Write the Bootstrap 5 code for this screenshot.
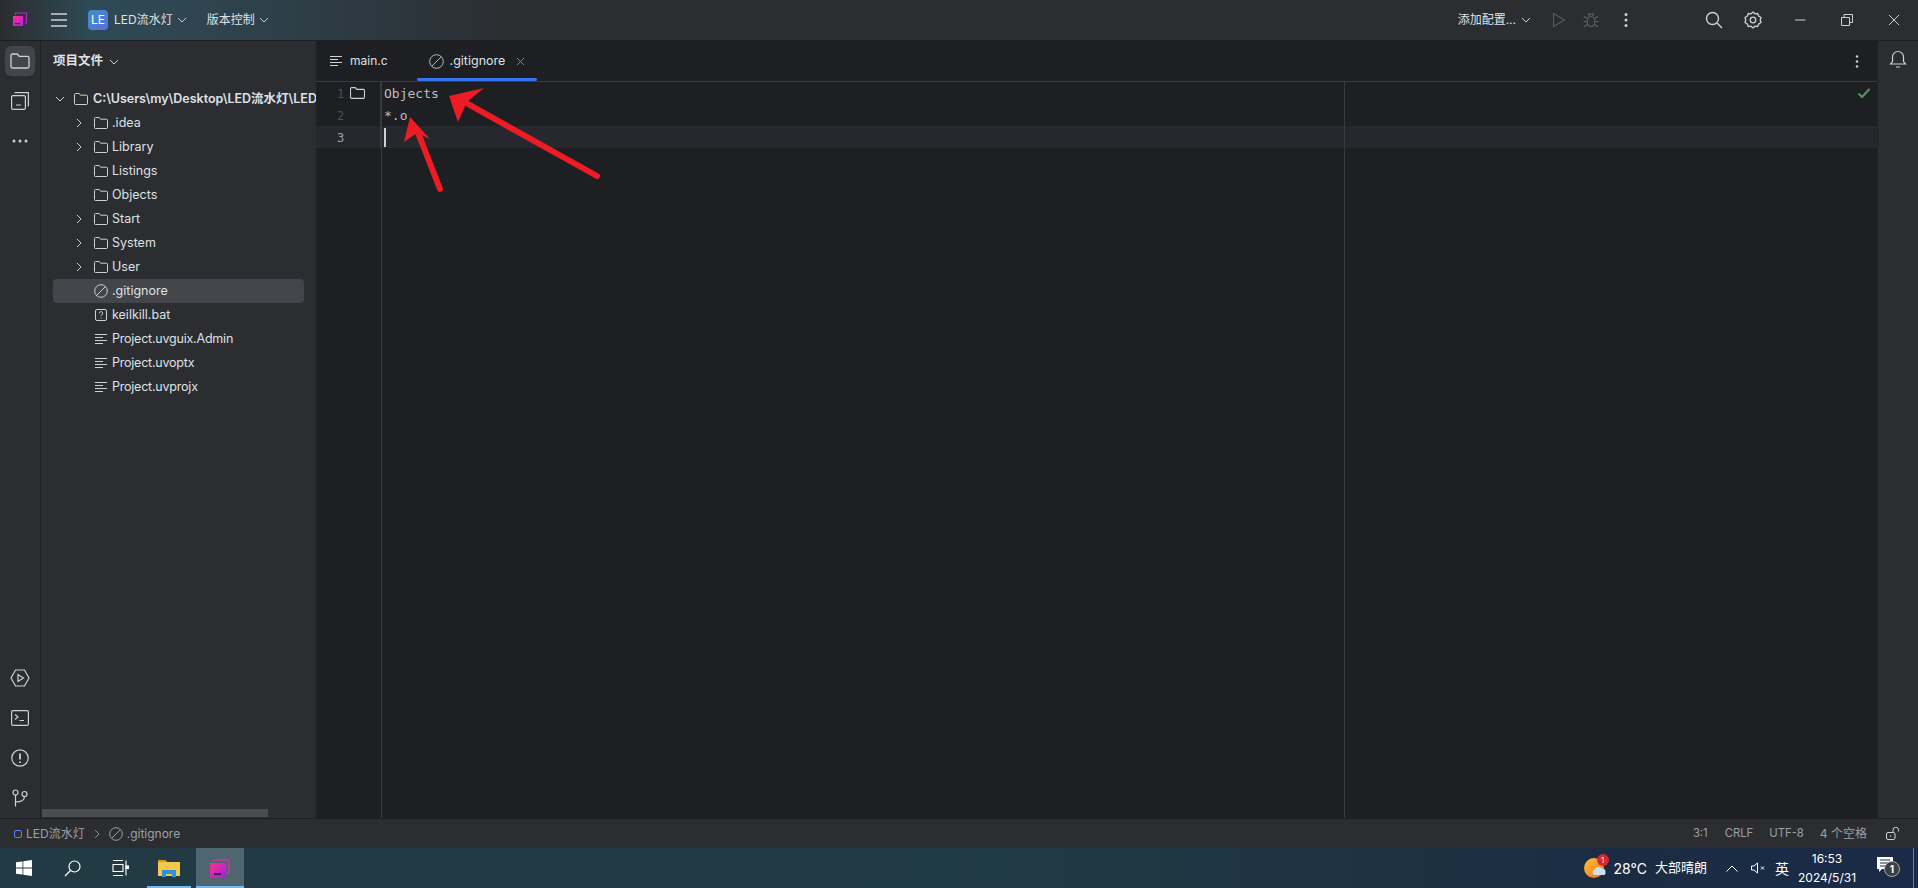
<!doctype html>
<html lang="zh"><head><meta charset="utf-8"><title>LED流水灯</title>
<link href="https://cdn.jsdelivr.net/npm/bootstrap@5.3.0/dist/css/bootstrap.min.css" rel="stylesheet">
<style>
html,body{height:100%;margin:0;overflow:hidden;background:#1e1f22}
body{font-family:Inter,"Noto Sans CJK SC",sans-serif;font-size:13px;color:#dfe1e5;position:relative;width:1918px;height:888px}
svg{display:block;flex:none;fill:none;stroke:#ced0d6;stroke-width:1}
.titlebar{height:41px;background:linear-gradient(90deg,#2b2d30 0,#2e4a55 90px,#2f4550 200px,#2d3a42 350px,#2b2d30 520px);border-bottom:1px solid #1e1f22;flex:none}
.tb-menu{font-size:12px;color:#dfe1e5}
.projbadge{width:20px;height:20px;border-radius:4px;background:linear-gradient(135deg,#3c8fc4,#5a6fe0);color:#fff;font-size:12px;line-height:20px;text-align:center}
.workarea{height:777px;flex:none}
.rail{width:41px;background:#2b2d30;border-right:1px solid #1e1f22;flex:none;padding-top:5px}
.railr{width:41px;background:#2b2d30;border-left:1px solid #1e1f22;flex:none;padding-top:9px}
.railbtn{width:30px;height:30px;border-radius:6px;margin-left:5px;margin-bottom:10px}
.railbtn.on{background:#43454a}
.lower .railbtn:last-child{margin-bottom:5px}
.sidebar{width:275px;background:#2b2d30;flex:none;position:relative;overflow:hidden}
.sidehead{height:41px;padding-left:12px;font-weight:600;font-size:12.5px}
.treelist{margin-top:5px}
.treerow{height:24px;white-space:nowrap;font-size:12.5px;line-height:24px;border-radius:4px;margin:0 12px;color:#dfe1e5}
.treerow.sel{background:#43454a}
.rootlabel{font-weight:600}
.tightlabel{letter-spacing:-.22px}
.hscroll{position:absolute;left:1px;bottom:1px;width:226px;height:8px;background:#4a4c50}
.editor{flex:1 1 auto;min-width:0;display:flex;flex-direction:column;position:relative}
.tabstrip{height:41px;border-bottom:1px solid #393b40;flex:none}
.edtab{height:40px;padding:0 12px;position:relative;font-size:12.5px}
.edtab.act::after{content:"";position:absolute;left:0;right:0;bottom:0;height:3px;border-radius:2px;background:#3574f0}
.plaintab{font-size:12px;padding-left:14px;padding-right:29px}
.codebody{flex:1 1 auto;position:relative;font-family:"DejaVu Sans Mono",monospace;font-size:13px;color:#bcbec4}
.cline{height:22px;line-height:24px}
.cline.cur{background:#26282e}
.lnum{width:65px;flex:none;padding-left:21px;color:#4b5059;font-size:12px;position:relative;border-right:1px solid #393b40;height:100%}
.cur .lnum{color:#a1a3ab}
.ctext{padding-left:3px}
.caret{width:2px;height:19px;background:#ced0d6;display:block}
.gutterline{position:absolute;top:0;bottom:0;left:65px;width:1px;background:#393b40}
.marginline{position:absolute;top:0;bottom:0;left:1028px;width:1px;background:#393b40}
.okmark{position:absolute;right:6px;top:5px}
.status{height:30px;background:#2b2d30;border-top:1px solid #1e1f22;flex:none;font-size:12px;color:#9da0a8;padding:0 18px 0 14px}
.statnarrow{font-size:11.3px}
.taskbar{height:40px;background:linear-gradient(90deg,#213a43 0%,#213b44 50%,#1b2c42 85%,#1a2a48 100%);flex:none;color:#fff}
.tbicon{height:40px;width:48px;position:relative}
.tbicon.run::after{content:"";position:absolute;left:0;right:0;bottom:0;height:2px;background:#76b9ed}
.tbicon.active{background:#4f6670}
.tray{font-size:13px}
.clock{font-size:12px;line-height:19px;text-align:center}
.arrows{position:absolute;left:0;top:0;pointer-events:none}
.arrows path{fill:#ed1c24;stroke:none}
.arrows line{stroke:#ed1c24;stroke-width:6;stroke-linecap:round}
.notif{position:absolute;right:-3px;bottom:3px;width:16px;height:16px;border-radius:50%;background:#3b3f42;border:1px solid #aaa;font-size:10px;font-weight:700;line-height:14px;text-align:center}
.redbadge{position:absolute;right:-3px;top:-3px;width:12px;height:12px;border-radius:50%;background:#d6282b;font-size:8px;line-height:12px;text-align:center;color:#fff}
</style></head>
<body class="d-flex flex-column">

<div class="titlebar d-flex align-items-center">
  <div class="d-flex align-items-center justify-content-center" style="width:40px">
    <svg width="16" height="16" viewBox="0 0 16 16"><defs><linearGradient id="lg" x1="0" y1="0" x2="1" y2="1"><stop offset="0" stop-color="#ff318c"/><stop offset="1" stop-color="#b31fe0"/></linearGradient></defs><path d="M3.5 3V1h11v10h-2" stroke="#b325d8" stroke-width="1.2"/><rect x="1" y="4" width="10" height="10" fill="url(#lg)" stroke="none"/><rect x="3" y="11" width="5" height="1.2" fill="#2b2d30" stroke="none"/></svg>
  </div>
  <svg width="16" height="16" viewBox="0 0 16 16" style="margin-left:11px;stroke-width:1.3"><path d="M0 2h16M0 8h16M0 14h16"/></svg>
  <div class="projbadge" style="margin-left:21px">LE</div>
  <span class="tb-menu" style="margin-left:6px">LED流水灯</span>
  <svg width="10" height="10" viewBox="0 0 10 10" class="ms-1"><path d="M1 3l4 4 4-4"/></svg>
  <span class="tb-menu ms-3 ps-1">版本控制</span>
  <svg width="10" height="10" viewBox="0 0 10 10" class="ms-1"><path d="M1 3l4 4 4-4"/></svg>
  <div class="ms-auto d-flex align-items-center">
    <span class="tb-menu">添加配置...</span>
    <svg width="10" height="10" viewBox="0 0 10 10" style="margin-left:5px"><path d="M1 3l4 4 4-4"/></svg>
    <svg width="14" height="16" viewBox="0 0 14 16" style="margin-left:21px;stroke:#55585e;stroke-width:1.2"><path d="M1.500 1.500v13l11-6.500z"/></svg>
    <svg width="16" height="16" viewBox="0 0 16 16" style="margin-left:17px;stroke:#5c5f65;stroke-width:1.200"><path d="M5.500 4.500a2.500 2.500 0 0 1 5 0"/><ellipse cx="8" cy="9.500" rx="3.800" ry="5"/><path d="M5.500 1l1.200 1.500M10.500 1L9.300 2.500M1 4.500l3.500 2M15 4.500l-3.500 2M.5 9.500h3.700M15.500 9.500h-3.700M1 15l3.500-2.500M15 15l-3.500-2.500"/></svg>
    <svg width="4" height="16" viewBox="0 0 4 16" style="margin-left:25px;fill:#ced0d6;stroke:none"><circle cx="2" cy="2.500" r="1.500"/><circle cx="2" cy="8" r="1.500"/><circle cx="2" cy="13.500" r="1.500"/></svg>
    <svg width="18" height="18" viewBox="0 0 18 18" style="margin-left:77px;stroke-width:1.400"><circle cx="7.500" cy="7.500" r="6"/><path d="M12 12l5 5"/></svg>
    <svg width="18" height="18" viewBox="0 0 18 18" style="margin-left:21px;stroke-width:1.300"><path d="M9 1l2 1.800 2.700-.3 1 2.500 2.300 1.500-.8 2.500.8 2.500-2.300 1.500-1 2.500-2.700-.3L9 17l-2-1.800-2.700.3-1-2.500L1 11.500 1.800 9 1 6.500 3.300 5l1-2.500 2.700.3z"/><circle cx="9" cy="9" r="2.800"/></svg>
    <svg width="12" height="12" viewBox="0 0 12 12" style="margin-left:32px"><path d="M1 6h10.500"/></svg>
    <svg width="12" height="12" viewBox="0 0 12 12" style="margin-left:35px"><path d="M.5 3.500h8v8h-8zM3 3.500V.5h8.500v8H8.500"/></svg>
    <svg width="12" height="12" viewBox="0 0 12 12" style="margin-left:35px;margin-right:18px"><path d="M1 1l10 10M11 1L1 11"/></svg>
  </div>
</div>

<div class="workarea d-flex">
  <div class="rail d-flex flex-column">
    <div class="railbtn on d-flex align-items-center justify-content-center"><svg width="20" height="16" viewBox="0 0 20 16" style="stroke-width:1.300"><path d="M1 13.500v-11A1.500 1.500 0 0 1 2.500 1h4.700l2 2.300h8.300A1.500 1.500 0 0 1 19 4.800v8.700a1.500 1.500 0 0 1-1.500 1.500h-15A1.500 1.500 0 0 1 1 13.500z"/></svg></div>
    <div class="railbtn d-flex align-items-center justify-content-center"><svg width="18" height="18" viewBox="0 0 18 18" style="stroke-width:1.200"><rect x=".6" y="3.600" width="13.800" height="13.800" rx="1.500"/><path d="M3.500 .6H17.400V14.500M5 13h5"/></svg></div>
    <div class="railbtn d-flex align-items-center justify-content-center"><svg width="16" height="4" viewBox="0 0 16 4" style="fill:#ced0d6;stroke:none"><circle cx="2" cy="2" r="1.500"/><circle cx="8" cy="2" r="1.500"/><circle cx="14" cy="2" r="1.500"/></svg></div>
    <div class="lower mt-auto">
      <div class="railbtn d-flex align-items-center justify-content-center"><svg width="20" height="18" viewBox="0 0 20 18" style="stroke-width:1.200"><path d="M1 9l4.500-8h9L19 9l-4.500 8h-9zM8 5.500v7l5.500-3.500z"/></svg></div>
      <div class="railbtn d-flex align-items-center justify-content-center"><svg width="18" height="16" viewBox="0 0 18 16" style="stroke-width:1.200"><rect x=".6" y=".6" width="16.800" height="14.800" rx="1.500"/><path d="M4 4.500l3 2.500-3 2.500M8.500 10.500H13"/></svg></div>
      <div class="railbtn d-flex align-items-center justify-content-center"><svg width="18" height="18" viewBox="0 0 18 18" style="stroke-width:1.200"><circle cx="9" cy="9" r="8.200"/><path d="M9 4.500v6M9 12.500v1.500" stroke-width="1.800"/></svg></div>
      <div class="railbtn d-flex align-items-center justify-content-center"><svg width="16" height="18" viewBox="0 0 16 18" style="stroke-width:1.200"><circle cx="3.500" cy="3.500" r="2.500"/><circle cx="12.500" cy="5" r="2.500"/><path d="M3.500 6v11.500M3.500 13c5 0 9-1.500 9-5.500"/></svg></div>
    </div>
  </div>

  <div class="sidebar">
    <div class="sidehead d-flex align-items-center">项目文件<svg width="10" height="10" viewBox="0 0 10 10" style="margin-left:6px"><path d="M1 3l4 4 4-4"/></svg></div>
    <div id="tree" class="treelist"></div>
    <div class="hscroll"></div>
  </div>

  <div class="editor">
    <div class="tabstrip d-flex align-items-end">
      <div class="edtab plaintab d-flex align-items-center">
        <svg width="13" height="10" viewBox="0 0 13 10"><path d="M0 .5h12M0 3.500h8M0 6.500h12M0 9.500h8"/></svg><span style="margin-left:7px">main.c</span>
      </div>
      <div class="edtab act d-flex align-items-center">
        <svg width="15" height="15" viewBox="0 0 15 15" style="stroke:#b4b8bf"><circle cx="7.500" cy="7.500" r="6.800"/><path d="M2.800 12.200l9.400-9.400"/></svg>
        <span style="margin-left:6px">.gitignore</span>
        <svg width="9" height="9" viewBox="0 0 9 9" style="margin-left:11px;stroke:#7f8288"><path d="M1 1l7 7M8 1L1 8"/></svg>
      </div>
      <svg width="4" height="13" viewBox="0 0 4 13" class="ms-auto align-self-center" style="margin-right:18px;fill:#ced0d6;stroke:none"><circle cx="2" cy="1.500" r="1.200"/><circle cx="2" cy="6.500" r="1.200"/><circle cx="2" cy="11.500" r="1.200"/></svg>
    </div>
    <div class="codebody">
      <div class="cline d-flex"><div class="lnum">1<svg width="15" height="12" viewBox="0 0 14 11" style="position:absolute;left:34px;top:5px;stroke:#ced0d6" aria-hidden="true"><path d="M.5 9.500v-8a1 1 0 0 1 1-1h3.500l1.200 1.600h6.300a1 1 0 0 1 1 1v6.400a1 1 0 0 1-1 1h-11a1 1 0 0 1-1-1z"/></svg></div><div class="ctext">Objects</div></div>
      <div class="cline d-flex"><div class="lnum">2</div><div class="ctext">*.o</div></div>
      <div class="cline cur d-flex"><div class="lnum">3</div><div class="ctext d-flex align-items-center"><span class="caret"></span></div></div>
      <div class="gutterline"></div>
      <div class="marginline"></div>
      <svg class="okmark" width="14" height="12" viewBox="0 0 14 12" style="stroke:#57965c;stroke-width:2"><path d="M1.500 6.500l3.500 3.500 7.500-8"/></svg>
    </div>
  </div>

  <div class="railr">
    <div class="d-flex justify-content-center"><svg width="18" height="18" viewBox="0 0 18 18" style="stroke-width:1.200"><path d="M1.500 14h15l-2-2.500V7a5.500 5.500 0 0 0-11 0v4.500zM7 17h4"/></svg></div>
  </div>
</div>

<div class="status d-flex align-items-center">
  <svg width="8" height="8" viewBox="0 0 8 8" style="stroke:#548af7"><rect x=".5" y=".5" width="7" height="7" rx="1.500"/></svg>
  <span class="ms-1">LED流水灯</span>
  <svg width="6" height="10" viewBox="0 0 6 10" style="margin-left:9px;stroke:#8a8d93"><path d="M1 1l4 4-4 4"/></svg>
  <svg width="14" height="14" viewBox="0 0 14 14" style="margin-left:9px;stroke:#9da0a8"><circle cx="7" cy="7" r="6.300"/><path d="M2.700 11.300l8.600-8.600"/></svg>
  <span class="ms-1">.gitignore</span>
  <div class="ms-auto d-flex align-items-center">
    <span class="statnarrow">3:1</span><span class="statnarrow" style="margin-left:17px">CRLF</span><span class="statnarrow" style="margin-left:16px">UTF-8</span><span style="margin-left:16px">4 个空格</span>
    <svg width="14" height="13" viewBox="0 0 14 13" style="margin-left:19px;stroke:#ced0d6"><rect x=".5" y="5.500" width="8.500" height="7" rx="1.500"/><path d="M7 5.500V3a2.700 2.700 0 0 1 5.500 0v1.500M4.700 8.500v1.500"/></svg>
  </div>
</div>

<div class="taskbar d-flex align-items-center">
  <div class="tbicon d-flex align-items-center justify-content-center">
    <svg width="16" height="16" viewBox="0 0 16 16" style="fill:#fff;stroke:none"><path d="M0 2.300l6.500-.9v6.200H0zM7.300 1.300L16 0v7.600H7.300zM0 8.400h6.500v6.200L0 13.700zM7.300 8.400H16V16l-8.700-1.300z"/></svg>
  </div>
  <div class="tbicon d-flex align-items-center justify-content-center">
    <svg width="17" height="17" viewBox="0 0 17 17" style="stroke:#fff;stroke-width:1.200"><circle cx="10.500" cy="6.500" r="5.500"/><path d="M6.500 10.500L1 16"/></svg>
  </div>
  <div class="tbicon d-flex align-items-center justify-content-center">
    <svg width="17" height="16" viewBox="0 0 17 16" style="stroke:#fff;stroke-width:1.100"><path d="M1 .5h10M1 15.500h10M1 4.500h10v7H1zM14 .5v15"/><rect x="14" y="6" width="2.500" height="2.500" fill="#fff"/></svg>
  </div>
  <div class="tbicon run d-flex align-items-center justify-content-center" style="margin-left:3px;width:44px">
    <svg width="22" height="18" viewBox="0 0 22 18" style="stroke:none"><path d="M0 1h7l2 2h13v14H0z" fill="#f5c84c"/><path d="M0 1h7l2 2H0z" fill="#d79b1a"/><path d="M4 18v-7h14v7h-4v-3H8v3z" fill="#2f91d8"/></svg>
  </div>
  <div class="tbicon active run d-flex align-items-center justify-content-center" style="margin-left:5px">
    <svg width="20" height="19" viewBox="0 0 20 19" style="stroke-width:0"><defs><linearGradient id="lg2" x1="0" y1="0" x2="1" y2="1"><stop offset="0" stop-color="#ff318c"/><stop offset="1" stop-color="#a11fe0"/></linearGradient></defs><path d="M3 3V1h16v13h-2" fill="none" stroke="#d82fa8" stroke-width="1.500"/><rect x="0" y="4" width="16" height="15" fill="url(#lg2)"/><rect x="4" y="14" width="7" height="2" fill="#3a2350"/></svg>
  </div>
  <div class="ms-auto tray d-flex align-items-center">
    <div class="position-relative" style="width:22px;height:22px;margin-right:8px">
      <svg width="22" height="22" viewBox="0 0 22 22" style="stroke:none"><defs><linearGradient id="sun" x1="0" y1="0" x2="1" y2="1"><stop offset="0" stop-color="#fdc33a"/><stop offset="1" stop-color="#f0701f"/></linearGradient></defs><circle cx="10" cy="11" r="10" fill="url(#sun)"/><path d="M10 18a3 3 0 0 1 1-5.500 3.500 3.500 0 0 1 6.500-1 3.300 3.300 0 0 1 4 3.500 3 3 0 0 1-1 3z" fill="#cfe0f2"/></svg>
      <span class="redbadge">1</span>
    </div>
    <span style="font-size:14px">28°C</span><span class="ms-2">大部晴朗</span>
    <svg width="12" height="7" viewBox="0 0 12 7" style="margin-left:19px;stroke:#fff"><path d="M.5 6.500L6 1l5.500 5.500"/></svg>
    <svg width="16" height="12" viewBox="0 0 16 12" style="margin-left:13px;stroke:#fff"><path d="M.5 4v4h2.500l3.500 3V1L3 4zM10 4.500l3 3M13 4.500l-3 3"/></svg>
    <span style="margin-left:8px;font-size:14px">英</span>
    <div class="clock" style="margin-left:9px;width:58px"><div>16:53</div><div>2024/5/31</div></div>
    <div class="position-relative" style="margin-left:21px;margin-right:16px;width:20px;height:24px">
      <svg width="16" height="16" viewBox="0 0 16 16" style="fill:#fff;stroke:none;margin-top:1px"><path d="M0 0h16v12H5l-3 3v-3H0z"/><path d="M3 3h10M3 6h10M3 9h7" stroke="#14294a"/></svg>
      <span class="notif">1</span>
    </div>
    <div style="width:1px;height:40px;background:#6a7a90;margin-right:4px"></div>
  </div>
</div>

<svg class="arrows" width="1918" height="888" viewBox="0 0 1918 888" aria-hidden="true">
  <line x1="597" y1="176" x2="468" y2="104"/><path d="M449 96l35-8-17 14-9 20z"/>
  <line x1="440" y1="189" x2="417" y2="130"/><path d="M410 117l20 22-13-6-13 9z"/>
</svg>

<script>
const fld='<svg width="14" height="12" viewBox="0 0 14 12"><path d="M.5 10.500v-9a1 1 0 0 1 1-1h3.700l1.300 1.700h6a1 1 0 0 1 1 1v7.300a1 1 0 0 1-1 1h-11a1 1 0 0 1-1-1z"/></svg>';
const ign='<svg width="14" height="14" viewBox="0 0 14 14"><circle cx="7" cy="7" r="6.300"/><path d="M2.700 11.300l8.600-8.600"/></svg>';
const q='<svg width="12" height="12" viewBox="0 0 12 12"><rect x=".5" y=".5" width="11" height="11" rx="1.500"/><path d="M4.300 4.300a1.700 1.700 0 1 1 2.500 1.500c-.6.300-.8.700-.8 1.200M6 8.500v1"/></svg>';
const txt='<svg width="13" height="10" viewBox="0 0 13 10"><path d="M0 .5h12M0 3.500h8M0 6.500h12M0 9.500h8"/></svg>';
const chev='<svg width="6" height="10" viewBox="0 0 6 10"><path d="M1 1l4 4-4 4"/></svg>';
const down='<svg width="10" height="6" viewBox="0 0 10 6"><path d="M1 1l4 4 4-4"/></svg>';
const rows=[[0,down,fld,'C:\\Users\\my\\Desktop\\LED流水灯\\LED流水灯',1],[1,chev,fld,'.idea'],[1,chev,fld,'Library'],[1,'',fld,'Listings'],[1,'',fld,'Objects'],[1,chev,fld,'Start'],[1,chev,fld,'System'],[1,chev,fld,'User'],[1,'',ign,'.gitignore',0,1],[1,'',q,'keilkill.bat'],[1,'',txt,'Project.uvguix.Admin',2],[1,'',txt,'Project.uvoptx',2],[1,'',txt,'Project.uvprojx',2]];
document.getElementById('tree').innerHTML=rows.map(r=>`<div class="treerow d-flex align-items-center${r[5]?' sel':''}"><div class="d-flex align-items-center" style="padding-left:${r[0]?23:2}px;width:${r[0]?43:20}px;flex:none">${r[1]}</div><div class="d-flex justify-content-center" style="width:16px;flex:none;margin-left:${r[0]?-3:0}px">${r[2]}</div><span class="${r[4]===1?'rootlabel':r[4]===2?'tightlabel':''}" style="margin-left:${r[0]?3:4}px">${r[3]}</span></div>`).join('');
</script>
</body></html>
